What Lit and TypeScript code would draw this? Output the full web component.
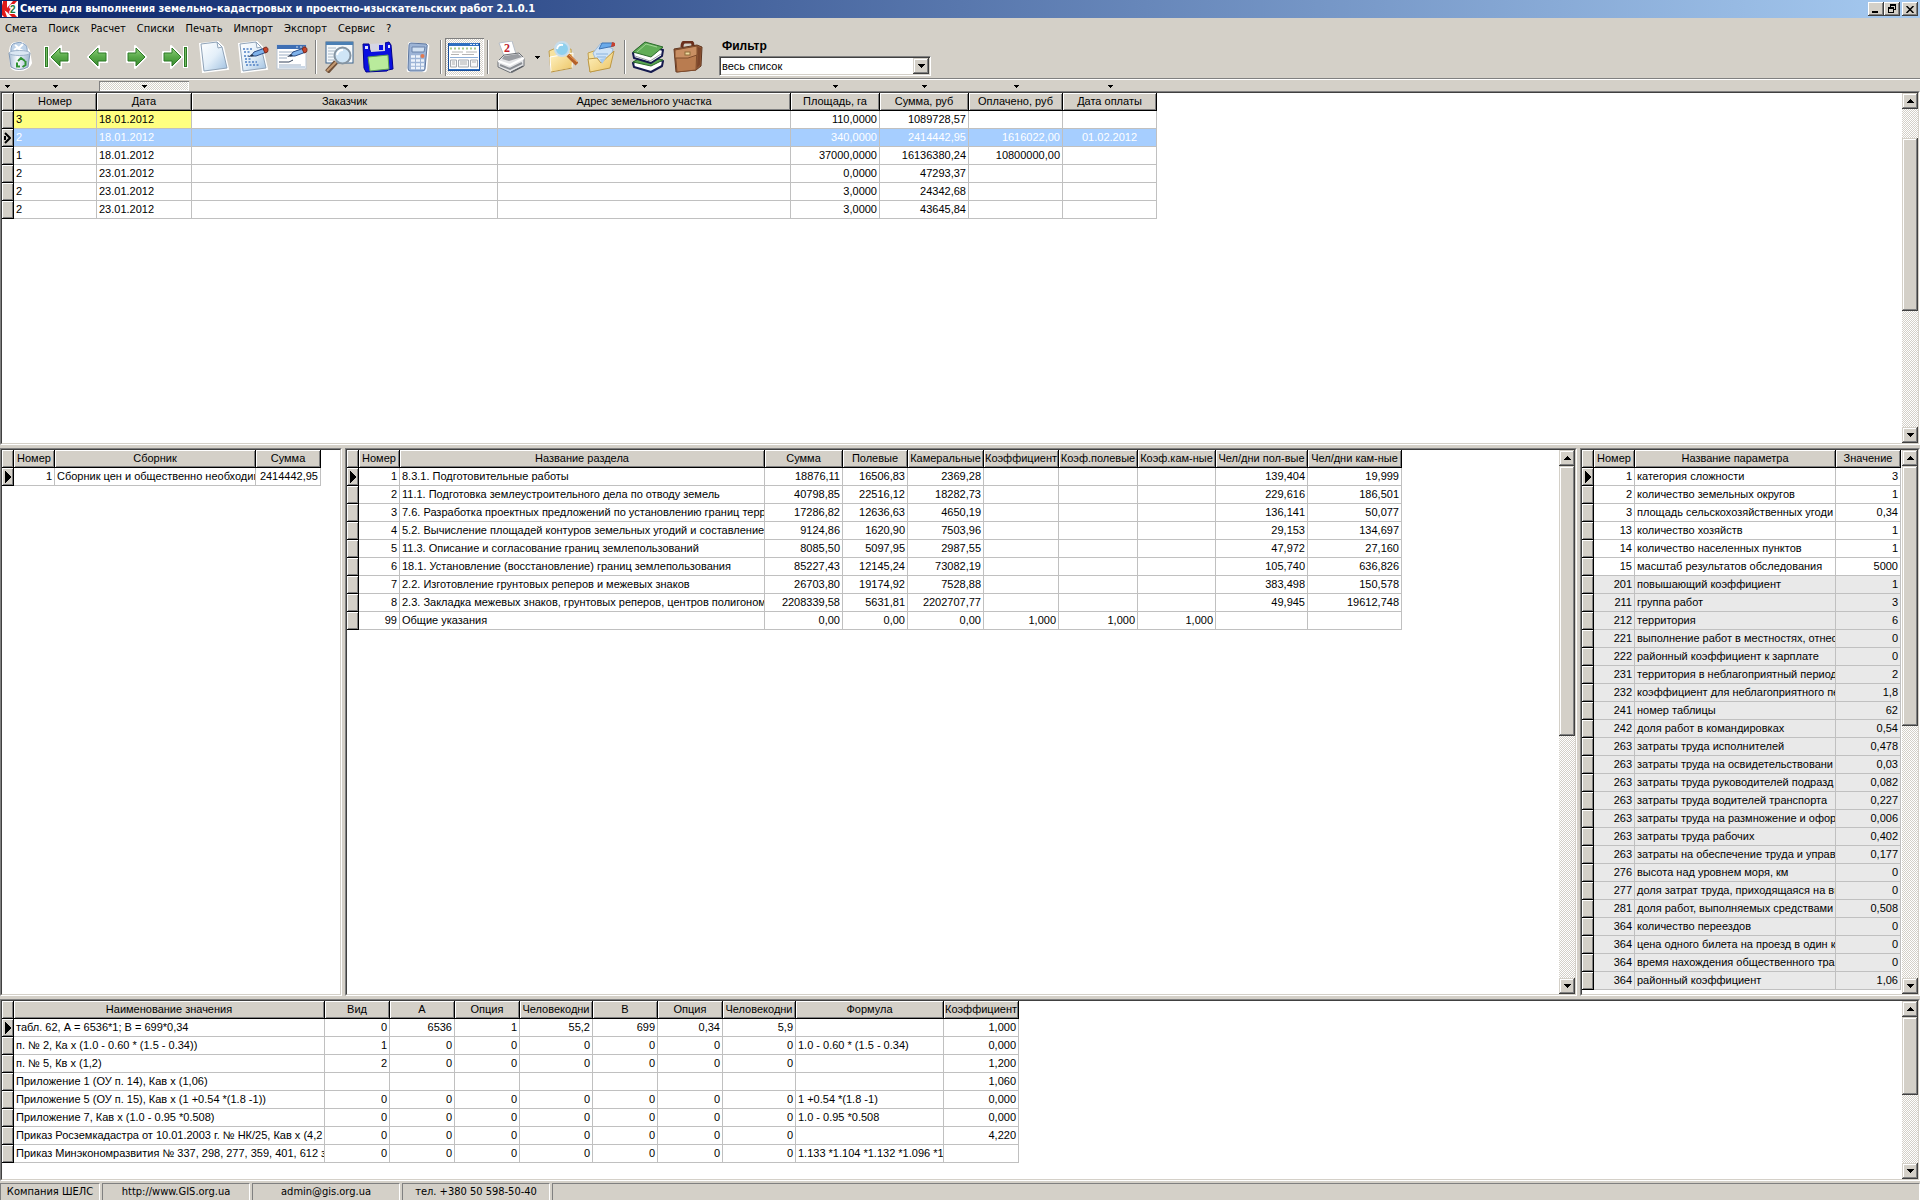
import { LitElement, html, svg, css, nothing, TemplateResult } from "lit";
import { customElement, property } from "lit/decorators.js";
import { classMap } from "lit/directives/class-map.js";
import { styleMap } from "lit/directives/style-map.js";

type Align = "left" | "right" | "center";
interface Column { title: string; width: number; align: Align; }
interface Row { cells: string[]; marker?: "current" | "multi"; tone?: "selected" | "shaded" | "marked"; }

const col = (title: string, width: number, align: Align = "right"): Column => ({ title, width, align });
const row = (...cells: string[]): Row => ({ cells });

/* ---------- data ---------- */

const estimateColumns = [
  col("Номер", 83, "left"), col("Дата", 95, "left"), col("Заказчик", 306, "left"),
  col("Адрес земельного участка", 293, "left"), col("Площадь, га", 89), col("Сумма, руб", 89),
  col("Оплачено, руб", 94), col("Дата оплаты", 94, "center"),
];
const estimateRows: Row[] = [
  { cells: ["3", "18.01.2012", "", "", "110,0000", "1089728,57", "", ""], tone: "marked" },
  { cells: ["2", "18.01.2012", "", "", "340,0000", "2414442,95", "1616022,00", "01.02.2012"], tone: "selected", marker: "multi" },
  row("1", "18.01.2012", "", "", "37000,0000", "16136380,24", "10800000,00", ""),
  row("2", "23.01.2012", "", "", "0,0000", "47293,37", "", ""),
  row("2", "23.01.2012", "", "", "3,0000", "24342,68", "", ""),
  row("2", "23.01.2012", "", "", "3,0000", "43645,84", "", ""),
];

const bookColumns = [col("Номер", 41), col("Сборник", 201, "left"), col("Сумма", 65)];
const bookRows: Row[] = [
  { cells: ["1", "Сборник цен и общественно необходим", "2414442,95"], marker: "current" },
];

const sectionColumns = [
  col("Номер", 41), col("Название раздела", 365, "left"), col("Сумма", 78), col("Полевые", 65),
  col("Камеральные", 76), col("Коэффициент", 75), col("Коэф.полевые", 79), col("Коэф.кам-ные", 78),
  col("Чел/дни пол-вые", 92), col("Чел/дни кам-ные", 94),
];
const sectionRows: Row[] = [
  { cells: ["1", "8.3.1. Подготовительные работы", "18876,11", "16506,83", "2369,28", "", "", "", "139,404", "19,999"], marker: "current" },
  row("2", "11.1. Подготовка землеустроительного дела по отводу земель", "40798,85", "22516,12", "18282,73", "", "", "", "229,616", "186,501"),
  row("3", "7.6. Разработка проектных предложений по установлению границ терр", "17286,82", "12636,63", "4650,19", "", "", "", "136,141", "50,077"),
  row("4", "5.2. Вычисление площадей контуров земельных угодий и составление", "9124,86", "1620,90", "7503,96", "", "", "", "29,153", "134,697"),
  row("5", "11.3. Описание и согласование границ землепользований", "8085,50", "5097,95", "2987,55", "", "", "", "47,972", "27,160"),
  row("6", "18.1. Установление (восстановление) границ землепользования", "85227,43", "12145,24", "73082,19", "", "", "", "105,740", "636,826"),
  row("7", "2.2. Изготовление грунтовых реперов и межевых знаков", "26703,80", "19174,92", "7528,88", "", "", "", "383,498", "150,578"),
  row("8", "2.3. Закладка межевых знаков, грунтовых реперов, центров полигоном", "2208339,58", "5631,81", "2202707,77", "", "", "", "49,945", "19612,748"),
  row("99", "Общие указания", "0,00", "0,00", "0,00", "1,000", "1,000", "1,000", "", ""),
];

const paramColumns = [col("Номер", 41), col("Название параметра", 201, "left"), col("Значение", 65)];
const paramData: [string, string, string][] = [
  ["1", "категория сложности", "3"],
  ["2", "количество земельных округов", "1"],
  ["3", "площадь сельскохозяйственных угоди", "0,34"],
  ["13", "количество хозяйств", "1"],
  ["14", "количество населенных пунктов", "1"],
  ["15", "масштаб результатов обследования", "5000"],
  ["201", "повышающий коэффициент", "1"],
  ["211", "группа работ", "3"],
  ["212", "территория", "6"],
  ["221", "выполнение работ в местностях, отнес", "0"],
  ["222", "районный коэффициент к зарплате", "0"],
  ["231", "территория в неблагоприятный период", "2"],
  ["232", "коэффициент для неблагоприятного пе", "1,8"],
  ["241", "номер таблицы", "62"],
  ["242", "доля работ в командировках", "0,54"],
  ["263", "затраты труда исполнителей", "0,478"],
  ["263", "затраты труда на освидетельствовани", "0,03"],
  ["263", "затраты труда руководителей подразд", "0,082"],
  ["263", "затраты труда водителей транспорта", "0,227"],
  ["263", "затраты труда на размножение и офор", "0,006"],
  ["263", "затраты труда рабочих", "0,402"],
  ["263", "затраты на обеспечение труда и управ", "0,177"],
  ["276", "высота над уровнем моря, км", "0"],
  ["277", "доля затрат труда, приходящаяся на вы", "0"],
  ["281", "доля работ, выполняемых средствами", "0,508"],
  ["364", "количество переездов", "0"],
  ["364", "цена одного билета на проезд в один к", "0"],
  ["364", "время нахождения общественного тра", "0"],
  ["364", "районный коэффициент", "1,06"],
];
const paramRows: Row[] = paramData.map((cells, i) => ({
  cells,
  marker: i === 0 ? "current" : undefined,
  tone: Number(cells[0]) > 200 ? "shaded" : undefined,
}));

const valueColumns = [
  col("Наименование значения", 311, "left"), col("Вид", 65), col("А", 65), col("Опция", 65),
  col("Человекодни", 73), col("В", 65), col("Опция", 65), col("Человекодни", 73),
  col("Формула", 148, "left"), col("Коэффициент", 75),
];
const valueRows: Row[] = [
  { cells: ["табл. 62, А = 6536*1; В = 699*0,34", "0", "6536", "1", "55,2", "699", "0,34", "5,9", "", "1,000"], marker: "current" },
  row("п. № 2, Ка х (1.0 - 0.60 * (1.5 - 0.34))", "1", "0", "0", "0", "0", "0", "0", "1.0 - 0.60 * (1.5 - 0.34)", "0,000"),
  row("п. № 5, Кв х (1,2)", "2", "0", "0", "0", "0", "0", "0", "", "1,200"),
  row("Приложение 1 (ОУ п. 14), Кав х (1,06)", "", "", "", "", "", "", "", "", "1,060"),
  row("Приложение 5 (ОУ п. 15), Кав х (1 +0.54 *(1.8 -1))", "0", "0", "0", "0", "0", "0", "0", "1 +0.54 *(1.8 -1)", "0,000"),
  row("Приложение 7, Кав х (1.0 - 0.95 *0.508)", "0", "0", "0", "0", "0", "0", "0", "1.0 - 0.95 *0.508", "0,000"),
  row("Приказ Росземкадастра от 10.01.2003 г. № НК/25, Кав х (4,2", "0", "0", "0", "0", "0", "0", "0", "", "4,220"),
  row("Приказ Минэкономразвития № 337, 298, 277, 359, 401, 612 з", "0", "0", "0", "0", "0", "0", "0", "1.133 *1.104 *1.132 *1.096 *1.", ""),
];

const menuItems = ["Смета", "Поиск", "Расчет", "Списки", "Печать", "Импорт", "Экспорт", "Сервис", "?"];
const statusCells = [
  { text: "Компания ШЕЛС" }, { text: "http://www.GIS.org.ua", href: "http://www.GIS.org.ua" },
  { text: "admin@gis.org.ua", href: "mailto:admin@gis.org.ua" }, { text: "тел. +380 50 598-50-40" },
];

/* ---------- toolbar icons, each on a 32 x 32 canvas ---------- */

const arrowLeft = (x: number) => svg`
  <path d="M${x} 16 l11 -11 v6 h8 v10 h-8 v6 z" fill="#f4f6f2" stroke="#fff" stroke-width="2" stroke-linejoin="round"/>
  <path d="M${x + 1} 16 l9 -9 v5 h8 v8 h-8 v5 z" fill="url(#green)" stroke="#2d7a26"/>`;
const arrowRight = (x: number) => svg`
  <path d="M${x} 16 l-11 -11 v6 h-8 v10 h8 v6 z" fill="#f4f6f2" stroke="#fff" stroke-width="2" stroke-linejoin="round"/>
  <path d="M${x - 1} 16 l-9 -9 v5 h-8 v8 h8 v5 z" fill="url(#green)" stroke="#2d7a26"/>`;
const greenDefs = svg`<defs><linearGradient id="green" x1="0" y1="0" x2="0" y2="1">
  <stop offset="0" stop-color="#8fcf7c"/><stop offset=".5" stop-color="#57a948"/><stop offset="1" stop-color="#3b8a31"/></linearGradient></defs>`;
const paperDefs = svg`<defs><linearGradient id="paper" x1="0" y1="0" x2="1" y2="1">
  <stop offset="0" stop-color="#fff"/><stop offset=".5" stop-color="#e3eff9"/><stop offset="1" stop-color="#9fc0e0"/></linearGradient></defs>`;
const folderDefs = svg`<defs><linearGradient id="folder" x1="0" y1="0" x2="1" y2="1">
  <stop offset="0" stop-color="#fff3c4"/><stop offset="1" stop-color="#ecc463"/></linearGradient></defs>`;
const paper = svg`${paperDefs}
  <path d="M2 3 L20 1 L25 6 L30 28 L5 31 Z" fill="#fff" stroke="#fff" stroke-width="2"/>
  <path d="M3 3 L19 1 L24 6 L29 27 L6 30 Z" fill="url(#paper)" stroke="#8fa3b8"/>
  <path d="M19 1 L20 7 L24 6 Z" fill="#fff" stroke="#8fa3b8"/>`;
const pencil = svg`<path d="M14 15 L17 11 L28 7 L30 11 L19 15 Z" fill="#7fb2ea" stroke="#2b4c86"/>
  <path d="M26 7.500 L29 6 Q32 7 30.500 11 L28 12 Z" fill="#c9452a" stroke="#7c2c1e"/>
  <path d="M11 16 L15 13 L17 15 Z" fill="#26364f"/>`;

const icons: Record<string, TemplateResult> = {
  recycle: svg`<defs><linearGradient id="bin" x1="0" x2="1"><stop offset="0" stop-color="#a8bed6"/><stop offset=".4" stop-color="#f7fafd"/><stop offset="1" stop-color="#9eb6d0"/></linearGradient></defs>
    <path d="M7 10 Q8 1 14 2 Q20 0 24 7 L26 10 L28 22 Q25 29 16 29 Q8 29 8 24 Z" fill="#fff" stroke="#fff" stroke-width="2"/>
    <path d="M8 12 Q7 2 13 2 Q17 0 21 3 Q25 4 24 12 Z" fill="#bed2e8" stroke="#86a0bf"/>
    <path d="M12 4 l4 3 4 -4 M11 9 l3 -2 6 3" stroke="#fff" stroke-width="2" fill="none"/>
    <path d="M6 12 L27 12 L25 26 Q16 31 8 26 Z" fill="url(#bin)" stroke="#8299b5"/>
    <ellipse cx="16.500" cy="12" rx="10.500" ry="2.500" fill="#dbe7f3" stroke="#9fb4cb"/>
    <path d="M15 20 l3 -3 4 3 M22.500 20 v4 l-3 2 M17 25.500 h-3 l0 -4" fill="none" stroke="#2f9333" stroke-width="2"/>`,
  first: svg`${greenDefs}<path d="M4.500 5 v22" stroke="#fff" stroke-width="5"/><path d="M4.500 6 v20" stroke="#2d7a26" stroke-width="3"/><path d="M4.500 7 v18" stroke="#74bb64"/>${arrowLeft(8)}`,
  prev: svg`${greenDefs}${arrowLeft(7)}`,
  next: svg`${greenDefs}${arrowRight(26)}`,
  last: svg`${greenDefs}<path d="M26.500 5 v22" stroke="#fff" stroke-width="5"/><path d="M26.500 6 v20" stroke="#2d7a26" stroke-width="3"/><path d="M26.500 7 v18" stroke="#74bb64"/>${arrowRight(23)}`,
  page: paper,
  pageEdit: svg`${paper}<path d="M6 8 h9 M7 11 h7 M7 15 h5 M8 18 h6 M8 21 h12 M9 24 h13" stroke="#4d7fc4" stroke-width="1.500" stroke-dasharray="2 1.500"/>${pencil}`,
  windowEdit: svg`<rect x="1" y="4" width="29" height="24" fill="#fff" stroke="#b9c5d3"/><rect x="1" y="4" width="29" height="4" fill="#3f6fb4"/><path d="M20 6 h2 M24 6 h2" stroke="#cfe0f4"/><path d="M27 6 h2" stroke="#e3703e"/>
    <path d="M3 11 h16 M3 14 h12 M3 17 h8 M3 24 h22" stroke="#9caec4"/><path d="M3 21 h10 l4 -2" stroke="#35435a" fill="none"/><path d="M3 26 h26" stroke="#cbd8e6" stroke-width="2"/>${pencil}`,
  search: svg`<rect x="3" y="1" width="27" height="21" fill="#f4f8fb" stroke="#3c658e"/><rect x="3" y="1" width="27" height="3" fill="#4a7fb4"/>
    <path d="M5 7 h8 M5 10 h7 M5 13 h6 M5 16 h7 M5 19 h6" stroke="#a8b8c6"/>
    <path d="M13 21 L4 31" stroke="#70513a" stroke-width="5"/><path d="M13 21 L4 30" stroke="#c59a72" stroke-width="2"/>
    <circle cx="19.500" cy="14.500" r="8" fill="#cfe5f6" stroke="#8494a2" stroke-width="2"/><path d="M14 14 q1 -5 6 -5" stroke="#fff" stroke-width="2" fill="none"/>`,
  save: svg`<path d="M1 3 L7 3 L8 10 L23 8 L23 2 L27 1 L29 4 L31 28 L26 29 L25 30 L4 31 L2 27 Z" fill="#0a10e0" stroke="#00008c"/>
    <path d="M8 3 L23 2 L23 10 L9 11 Z" fill="#d5d5e4"/><path d="M17 4 h4 v5 h-4 z" fill="#0a10e0"/><path d="M3 5 h3 v3 h-3 z M26 4 h2 v3 h-2 z" fill="#dfe3ff"/>
    <path d="M6 16 L26 14 L27 28 L8 30 Z" fill="#b9eb9c" stroke="#5d9c50"/>`,
  calculator: svg`<path d="M9 1 L27 3 Q29 4 28 7 L26 29 Q25 32 22 31 L7 31 Q5 30 6 27 L7 4 Q7 1 9 1 Z" fill="#fff"/><path d="M10 2 L25 3 Q27 4 26 6 L24 28 Q24 30 21 30 L9 30 Q7 30 7 27 L8 4 Q8 2 10 2 Z" fill="#9db4d6" stroke="#5d769e"/>
    <path d="M11 6 L24 6 L23 11 L11 11 Z" fill="#d2e1f2" stroke="#6882aa"/>
    <path d="M10 15.500 h4 M15 15.500 h4 M10 19.500 h4 M15 19.500 h4 M20 19.500 h3 M10 23.500 h4 M15 23.500 h4 M20 23.500 h3 M10 27 h4 M15 27 h4 M20 27 h3" stroke="#edf3fb" stroke-width="2.500"/><circle cx="21.500" cy="15" r="2" fill="#e2794f"/>`,
  table: svg`<rect x="0.500" y="2.500" width="31" height="27" fill="#fff" stroke="#174e9c"/><rect x="1" y="2" width="30" height="3" fill="#2f6fc0"/><path d="M22 3.500 h2 M25 3.500 h2 M28 3.500 h2" stroke="#d7e7fa"/>
    <path d="M2 7.500 h28" stroke="#a9c98c" stroke-width="2" stroke-dasharray="2 2"/>
    <path d="M4 11 h11 M18 11 h11 M3 13.500 h8 M14 13.500 h12" stroke="#b4b4b4"/><path d="M2 16.500 h28" stroke="#8fb0d8"/>
    <path d="M2.500 19 h6 v7 h-6 z M10.500 19 h10 v7 h-10 z M22.500 19 h7 v7 h-7 z" fill="#f6f7f8" stroke="#a4a9b0"/><path d="M4 21 h3 M12 21 h7 M24 21 h4 M4 23 h3 M12 23 h7" stroke="#b0b0b0"/>
    <path d="M1 28.500 h30" stroke="#2f6fc0"/>`,
  print: svg`<path d="M4 2 L17 0 L21 13 L9 15 Z" fill="#fff" stroke="#b6bdc6"/>
    <path d="M3 20 L9 14 L24 12 L29 17 L29 25 L16 32 L3 26 Z" fill="#e3e4e6" stroke="#6d7176"/><path d="M9 15 L23 13 L27 16 L14 20 L7 18 Z" fill="#9a9da2"/>
    <path d="M3 20 L15 24 L29 17" fill="none" stroke="#fff" stroke-width="2"/><path d="M5 24 L15 28 L27 22" fill="none" stroke="#8b8f95" stroke-width="2"/><path d="M16 31 L28 25" stroke="#484b50"/>
    <text x="9" y="11" font-family="Liberation Serif, serif" font-size="12" font-weight="bold" fill="#c0202c">2</text>`,
  folderSearch: svg`${folderDefs}<path d="M3 10 L10 7 L13 10 L25 8 L26 27 L5 31 Z" fill="#f6e2a0" stroke="#c2a04f"/><path d="M4 16 L27 12 L26 27 L5 31 Z" fill="url(#folder)" stroke="#fff"/><path d="M5 31 L26 27" stroke="#b8923f"/>
    <path d="M22 14 L31 23" stroke="#b4602a" stroke-width="4"/><path d="M22 13 L31 21" stroke="#f0a65e"/><circle cx="16" cy="8" r="7" fill="#8fd0ee" stroke="#c8dcea" stroke-width="2"/><path d="M11 8 q1 -5 6 -4" stroke="#fff" stroke-width="2" fill="none"/>`,
  folderEdit: svg`${folderDefs}<path d="M3 12 L9 10 L25 9 L25 26 L5 31 Z" fill="#f6e2a0" stroke="#c2a04f"/>
    <path d="M8 12 L16 2 L28 8 L25 20 L12 22 Z" fill="#cfe3f7" stroke="#9fbbd8"/><path d="M11 13 h12 M12 16 h9" stroke="#8bb3dd"/>
    <path d="M14 8 L17 2 L29 2 L29 5 L19 7 Z" fill="#6aaaea" stroke="#3f74b4"/><path d="M27 1 L30 2 L30 5 L26 6 Z" fill="#c8402c"/>
    <path d="M3 18 L12 17 L16 22 L29 10 L25 27 L5 31 Z" fill="url(#folder)" stroke="#bd9845"/><path d="M15 18 L21 17 L17 23 Z" fill="#a9cbee"/>`,
  books: svg`<path d="M1 22 L12 16 L31 20 L30 25 L19 31 L2 26 Z" fill="#fff" stroke="#151a4e" stroke-width="2" stroke-linejoin="round"/><path d="M1 21 L12 15 L31 19 L19 25 Z" fill="#5aa552" stroke="#2c6a2c"/>
    <path d="M1 12 L12 3 L31 9 L30 15 L19 22 L2 17 Z" fill="#fff" stroke="#151a4e" stroke-width="2" stroke-linejoin="round"/><path d="M3 15 L18 20 L29 13" fill="none" stroke="#9ba3a8"/>
    <path d="M1 11 L13 1 L31 6 L19 16 Z" fill="#61ad57" stroke="#2c6a2c"/><path d="M5 11 L14 3 L25 6" fill="none" stroke="#a4d597"/>`,
  briefcase: svg`<path d="M11 6 Q11 1 14 1 L20 1 Q22 1 22 5" fill="none" stroke="#6b2f1c" stroke-width="3"/>
    <path d="M3 8 L26 4 L31 6 L30 25 L25 29 L5 31 Z" fill="#9a5f3b" stroke="#5f3620"/><path d="M4 9 L26 5 L25 29 L6 31 Z" fill="#b97c50" stroke="#7f4c2d"/>
    <path d="M4 9 L26 5 L26 14 L17 17 L4 17 Z" fill="#c98f63" stroke="#7f4c2d"/><path d="M27 6 L30 7 L29 24 L26 27 Z" fill="#7b452a"/><rect x="14" y="11" width="5" height="3" fill="#eed9a0" stroke="#8c6a38"/>`,
};

interface Tool { kind: "tool" | "sep" | "drop"; icon?: string; label?: string; pressed?: boolean; }
const tool = (icon: string, label: string, pressed = false): Tool => ({ kind: "tool", icon, label, pressed });
const sep: Tool = { kind: "sep" };
const tools: Tool[] = [
  tool("recycle", "Корзина"), tool("first", "Первая запись"), tool("prev", "Предыдущая запись"), tool("next", "Следующая запись"),
  tool("last", "Последняя запись"), tool("page", "Новая смета"), tool("pageEdit", "Изменить смету"), tool("windowEdit", "Форма"), sep,
  tool("search", "Поиск"), tool("save", "Сохранить"), tool("calculator", "Расчет"), sep, tool("table", "Таблица", true), sep,
  tool("print", "Печать"), { kind: "drop" }, tool("folderSearch", "Открыть"), tool("folderEdit", "Экспорт"), sep,
  tool("books", "Списки"), tool("briefcase", "Сервис"),
];

/* ---------- shared pieces ---------- */

const raised = css`
  .raised {
    background: #d4d0c8;
    box-shadow: inset -1px -1px #404040, inset 1px 1px #d4d0c8, inset -2px -2px #808080, inset 2px 2px #fff;
  }
  .dither { background: repeating-conic-gradient(#fff 0 25%, #d4d0c8 0 50%) 0 0 / 2px 2px; }
  button { border: 0; padding: 0; margin: 0; font: inherit; color: inherit; }
`;
const caret = (dir: "up" | "down") => html`<svg width="7" height="4" viewBox="0 0 7 4" shape-rendering="crispEdges" aria-hidden="true">
  <path d=${dir === "up" ? "M3 0h1v1h1v1h1v1h1v1H0V3h1V2h1V1h1z" : "M0 0h7v1H6v1H5v1H4v1H3V3H2V2H1V1H0z"}/></svg>`;
const sortMark = html`<svg width="5" height="3" viewBox="0 0 5 3" shape-rendering="crispEdges" aria-hidden="true"><path d="M0 0h5v1H4v1H3v1H2V2H1V1H0z"/></svg>`;

@customElement("scroll-strip")
class ScrollStrip extends LitElement {
  @property({ type: Number }) before = 0;
  @property({ type: Number }) thumb = 1;
  @property({ type: Number }) after = 1;
  static styles = [raised, css`
    :host { display: flex; flex-direction: column; width: 16px; flex: none; }
    .arrow { display: flex; align-items: center; justify-content: center; flex: none; height: 16px; }
    .track { display: flex; flex-direction: column; flex: 1; min-height: 0; }
  `];
  render() {
    return html`
      <button class="arrow raised" aria-label="Вверх">${caret("up")}</button>
      <div class="track dither">
        <div style=${styleMap({ flexGrow: this.before })}></div>
        <div class="raised" style=${styleMap({ flexGrow: this.thumb })}></div>
        <div style=${styleMap({ flexGrow: this.after })}></div>
      </div>
      <button class="arrow raised" aria-label="Вниз">${caret("down")}</button>`;
  }
}

@customElement("data-grid")
class DataGrid extends LitElement {
  @property({ attribute: false }) columns: Column[] = [];
  @property({ attribute: false }) rows: Row[] = [];
  @property({ attribute: false }) scroll?: [number, number, number];
  @property() name = "";
  static styles = css`
    :host {
      display: flex; box-sizing: border-box; min-width: 0; min-height: 0; overflow: hidden; background: #fff;
      border: 1px solid; border-color: #808080 #fff #fff #808080;
    }
    .inner {
      display: flex; flex: 1; min-width: 0; border: 1px solid; border-color: #404040 #d4d0c8 #d4d0c8 #404040;
    }
    .view { flex: 1; min-width: 0; overflow: hidden; }
    table { table-layout: fixed; border-collapse: separate; border-spacing: 0; }
    th, td {
      box-sizing: border-box; height: 18px; padding: 0 2px; overflow: hidden; white-space: nowrap;
      font-weight: normal; line-height: 17px; vertical-align: top;
    }
    thead th, .mark {
      background: #d4d0c8; border-right: 1px solid #000; border-bottom: 1px solid #000;
      box-shadow: inset 1px 1px #fff, inset -1px -1px #808080;
    }
    thead th { text-align: center; padding: 0; }
    .clip { display: flex; justify-content: center; }
    td { border-right: 1px solid #c0c0c0; border-bottom: 1px solid #c0c0c0; }
    td.mark { border-color: #000; padding: 0; vertical-align: middle; }
    .mark svg { display: block; margin: 0 auto; }
    .right { text-align: right; }
    .center { text-align: center; }
    .selected td:not(.mark) { background: #a6ceff; color: #fff; }
    .shaded td:not(.mark) { background: #e9e9e9; }
    .marked td:nth-child(2), .marked td:nth-child(3) { background: #ffff80; }
  `;
  private marker(kind?: string) {
    if (kind === "current") return html`<svg width="6" height="12" viewBox="0 0 6 12" shape-rendering="crispEdges"><path d="M0 0L6 6L0 12z"/></svg>`;
    if (kind === "multi") return html`<svg width="7" height="12" viewBox="0 0 7 12"><path d="M1 1L6 6L1 11M1 4v4" fill="none" stroke="#000" stroke-width="2"/></svg>`;
    return nothing;
  }
  render() {
    const total = this.columns.reduce((sum, c) => sum + c.width, 12);
    return html`<div class="inner">
      <div class="view">
        <table aria-label=${this.name} style=${styleMap({ width: `${total}px` })}>
          <colgroup><col style="width:12px">${this.columns.map(c => html`<col style=${styleMap({ width: `${c.width}px` })}>`)}</colgroup>
          <thead><tr><th></th>${this.columns.map(c => html`<th scope="col"><span class="clip">${c.title}</span></th>`)}</tr></thead>
          <tbody>${this.rows.map(r => html`<tr class=${r.tone ?? ""}>
            <td class="mark">${this.marker(r.marker)}</td>
            ${r.cells.map((text, i) => html`<td class=${this.columns[i].align}>${text}</td>`)}
          </tr>`)}</tbody>
        </table>
      </div>
      ${this.scroll ? html`<scroll-strip .before=${this.scroll[0]} .thumb=${this.scroll[1]} .after=${this.scroll[2]}></scroll-strip>` : nothing}
    </div>`;
  }
}

@customElement("app-root")
class AppRoot extends LitElement {
  static styles = [raised, css`
    :host {
      display: grid; height: 100vh; overflow: hidden; background: #d4d0c8; color: #000;
      grid-template-rows: 18px 20px 40px 13px minmax(0, 354fr) minmax(0, 554fr) minmax(0, 182fr) 19px;
      font: 11px/16px "Liberation Sans", Arial, sans-serif;
    }
    .title {
      display: flex; align-items: center; padding: 0 2px; color: #fff;
      background: linear-gradient(to right, #0a246a, #a6caf0);
    }
    .title h1 { flex: 1; margin: 0 0 0 2px; font: bold 11px/16px "DejaVu Sans Condensed", "DejaVu Sans", sans-serif; }
    .logo { display: block; }
    .winbtn {
      display: flex; align-items: center; justify-content: center; width: 16px; height: 14px; background: #d4d0c8;
      box-shadow: inset -1px -1px #404040, inset 1px 1px #fff, inset -2px -2px #808080;
    }
    .winbtn.close { margin-left: 2px; }
    .menu { display: flex; align-items: center; gap: 11px; padding: 2px 5px 0; }
    .menu button { background: none; }
    .menu, .status { font-family: "DejaVu Sans Condensed", "DejaVu Sans", sans-serif; }
    .toolbar { display: flex; align-items: flex-start; }
    .tool { display: flex; flex: none; box-sizing: border-box; width: 39px; height: 38px; padding: 3px; background: none; }
    .tool.pressed {
      background: repeating-conic-gradient(#fff 0 25%, #d4d0c8 0 50%) 0 0 / 2px 2px;
      box-shadow: inset 1px 1px #808080, inset -1px -1px #fff;
    }
    .tool svg { display: block; flex: none; }
    .sep { flex: none; width: 2px; height: 34px; margin: 2px 3px; background: linear-gradient(to right, #808080 50%, #fff 50%); }
    .drop { flex: none; width: 12px; height: 38px; background: none; }
    .drop svg { display: block; margin: 0 auto; }
    .filter { display: flex; flex-direction: column; gap: 1px; padding-left: 12px; }
    .filter label { padding-left: 3px; font-weight: bold; font-size: 12px; line-height: 17px; }
    .combo { display: flex; position: relative; width: 212px; }
    .combo select {
      flex: 1; height: 20px; box-sizing: border-box; appearance: none; margin: 0; padding: 0 2px; border-radius: 0; background: #fff;
      border: 1px solid; border-color: #808080 #fff #fff #808080; box-shadow: inset 1px 1px #404040, inset -1px -1px #d4d0c8;
      font: inherit; color: #000;
    }
    .combo .arrow {
      position: absolute; right: 2px; top: 2px; bottom: 2px; width: 16px; pointer-events: none;
      display: flex; align-items: center; justify-content: center;
    }
    .sorts {
      display: grid; grid-template-columns: 14px 83px 95px 306px 293px 89px 89px 94px 94px; align-items: stretch;
      box-sizing: border-box; padding-top: 2px; border-top: 1px solid #808080; box-shadow: inset 0 1px #fff;
    }
    .sorts button { display: flex; align-items: center; justify-content: center; background: none; }
    .sorts .active {
      margin: 0 3px 0 2px;
      background: repeating-conic-gradient(#fff 0 25%, #d4d0c8 0 50%) 0 0 / 2px 2px;
      box-shadow: inset 1px 1px #808080, inset -1px -1px #fff;
    }
    .mid { display: grid; grid-template-columns: 342px minmax(0, 1fr) 340px; gap: 3px; padding: 3px 0; min-height: 0; }
    .status { display: grid; grid-template-columns: 100px 148px 148px 148px 1fr; gap: 2px; padding-top: 2px; line-height: 15px; }
    .cell { border: 1px solid; border-color: #808080 #fff #fff #808080; border-bottom: 0; text-align: center; overflow: hidden; white-space: nowrap; }
    .cell a { color: inherit; text-decoration: none; }
  `];

  private sortButton(active = false) {
    return html`<button class=${classMap({ active })} aria-label="Сортировка">${sortMark}</button>`;
  }

  render() {
    return html`
      <header class="title">
        <svg class="logo" width="16" height="16" viewBox="0 0 16 16" aria-hidden="true">
          <rect width="16" height="16" fill="#fff"/><path d="M1 0h4v7l6 -7h4l-7 8 7 8h-5L5 11 0 8z" fill="#e01818"/><path d="M0 2v12l2 2h3z" fill="#e01818"/>
          <text x="8" y="12" font-family="Liberation Sans, sans-serif" font-size="10" font-weight="bold" fill="#1d7a37" stroke="#fff" stroke-width="2" paint-order="stroke">2</text>
        </svg>
        <h1>Сметы для выполнения земельно-кадастровых и проектно-изыскательских работ 2.1.0.1</h1>
        <button class="winbtn" aria-label="Свернуть"><svg width="10" height="8" shape-rendering="crispEdges"><path d="M1 6h6v2H1z"/></svg></button>
        <button class="winbtn" aria-label="Восстановить"><svg width="10" height="10" shape-rendering="crispEdges"><path d="M3 0h6v6H7V5h1V2H4v1H3z M1 3h6v6H1z M2 5h4v3H2z" fill-rule="evenodd"/></svg></button>
        <button class="winbtn close" aria-label="Закрыть"><svg width="8" height="7" viewBox="0 0 8 7"><path d="M0.500 0L7.500 7M7.500 0L0.500 7" stroke="#000" stroke-width="1.500"/></svg></button>
      </header>
      <nav class="menu">${menuItems.map(m => html`<button>${m}</button>`)}</nav>
      <div class="toolbar">
        ${tools.map(t => t.kind === "sep" ? html`<span class="sep"></span>`
          : t.kind === "drop" ? html`<button class="drop" aria-label="Варианты печати">${sortMark}</button>`
          : html`<button class=${classMap({ tool: true, pressed: !!t.pressed })} aria-label=${t.label}>
              <svg width="32" height="32" viewBox="0 0 32 32" aria-hidden="true">${icons[t.icon!]}</svg></button>`)}
        <div class="filter">
          <label for="filter">Фильтр</label>
          <div class="combo">
            <select id="filter"><option>весь список</option></select>
            <span class="arrow raised">${caret("down")}</span>
          </div>
        </div>
      </div>
      <div class="sorts">
        ${this.sortButton()}${this.sortButton()}${this.sortButton(true)}
        ${[0, 1, 2, 3, 4, 5].map(() => this.sortButton())}
      </div>
      <data-grid name="Сметы" .columns=${estimateColumns} .rows=${estimateRows} .scroll=${[29, 173, 116]}></data-grid>
      <div class="mid">
        <data-grid name="Сборники" .columns=${bookColumns} .rows=${bookRows}></data-grid>
        <data-grid name="Разделы" .columns=${sectionColumns} .rows=${sectionRows} .scroll=${[0, 270, 242]}></data-grid>
        <data-grid name="Параметры" .columns=${paramColumns} .rows=${paramRows} .scroll=${[0, 260, 252]}></data-grid>
      </div>
      <data-grid name="Значения" .columns=${valueColumns} .rows=${valueRows} .scroll=${[0, 78, 68]}></data-grid>
      <footer class="status">
        ${statusCells.map(s => html`<div class="cell">${s.href ? html`<a href=${s.href}>${s.text}</a>` : s.text}</div>`)}
        <div class="cell"></div>
      </footer>`;
  }
}
